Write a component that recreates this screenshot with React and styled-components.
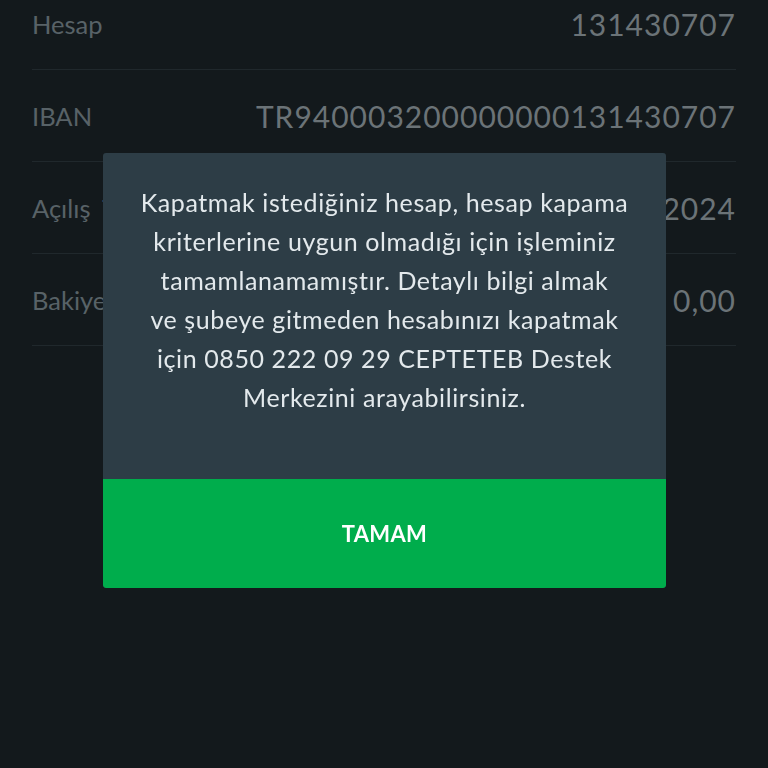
import React from 'react';
import styled, { createGlobalStyle } from 'styled-components';

const GlobalStyle = createGlobalStyle`
  html, body {
    margin: 0;
    padding: 0;
    background: #13191c;
    font-family: Lato, "Open Sans", sans-serif;
    overflow: hidden;
  }
`;

const Screen = styled.div`
  width: 768px;
  height: 768px;
  background: #13191c;
  overflow: hidden;
`;

const List = styled.div`
  margin: -22px 32px 0 32px;
  display: flex;
  flex-direction: column;
`;

const Row = styled.div`
  height: 91px;
  display: flex;
  align-items: center;
  justify-content: space-between;
  border-bottom: 1px solid #20282c;
`;

const Label = styled.span`
  font-size: 25.5px;
  word-spacing: 6px;
  color: #586267;
`;

const Value = styled.span`
  font-size: 30px;
  color: #6b7377;
  letter-spacing: ${p => p.$spread ?? 1}px;
`;

const Overlay = styled.div`
  position: fixed;
  inset: 0;
  display: flex;
  justify-content: center;
  align-items: flex-start;
  padding-top: 153px;
  padding-left: 1px;
`;

const Dialog = styled.div`
  width: 563px;
  display: flex;
  flex-direction: column;
  border-radius: 3px;
  overflow: hidden;
  background: #2d3d46;
`;

const Message = styled.p`
  margin: 0;
  padding: 30px 10px 62px;
  text-align: center;
  font-size: 25px;
  line-height: 39px;
  letter-spacing: 0.6px;
  color: #e3e9ec;
`;

const OkButton = styled.button`
  height: 109px;
  border: 0;
  border-radius: 0 0 3px 3px;
  background: #00ad4c;
  color: #ffffff;
  font-family: Lato, sans-serif;
  font-weight: 700;
  font-size: 22px;
  letter-spacing: 0.3px;
  cursor: pointer;
`;

const rows = [
  { label: 'Hesap', value: '131430707' },
  { label: 'IBAN', value: 'TR940003200000000131430707', spread: 1 },
  { label: 'Açılış Tarihi', value: '12.03.2024' },
  { label: 'Bakiye', value: '0,00' },
];

export default function App() {
  return (
    <Screen>
      <GlobalStyle />
      <List>
        {rows.map(r => (
          <Row key={r.label}>
            <Label>{r.label}</Label>
            <Value $spread={r.spread}>{r.value}</Value>
          </Row>
        ))}
      </List>
      <Overlay>
        <Dialog role="dialog">
          <Message>
            Kapatmak istediğiniz hesap, hesap kapama<br />
            kriterlerine uygun olmadığı için işleminiz<br />
            tamamlanamamıştır. Detaylı bilgi almak<br />
            ve şubeye gitmeden hesabınızı kapatmak<br />
            için 0850 222 09 29 CEPTETEB Destek<br />
            Merkezini arayabilirsiniz.
          </Message>
          <OkButton>TAMAM</OkButton>
        </Dialog>
      </Overlay>
    </Screen>
  );
}
